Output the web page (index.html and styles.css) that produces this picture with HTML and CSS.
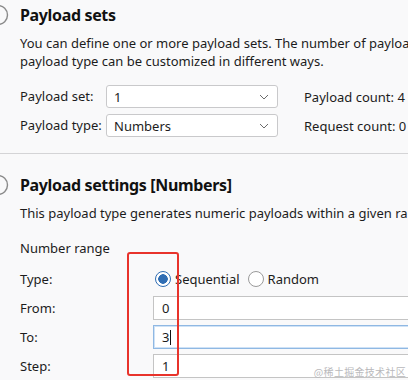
FILE: index.html
```html
<!DOCTYPE html>
<html>
<head>
<meta charset="utf-8">
<link rel="stylesheet" href="styles.css">
</head>
<body>
<div class="page">
  <section class="sec sec-sets">
    <div class="head">
      <svg class="tog" width="12" height="24" viewBox="0 0 12 24"><circle cx="-2" cy="12" r="9.5" fill="none" stroke="#8a8a8a" stroke-width="1.4"/></svg>
      <h2>Payload sets</h2>
    </div>
    <p class="desc">
      <span class="ln">You can define one or more payload sets. The number of payload sets depends on the attack type defined in the Positions tab. Various payload types are available for each payload set, and each</span>
      <span class="ln">payload type can be customized in different ways.</span>
    </p>
    <div class="grid">
      <span class="lbl">Payload set:</span>
      <div class="select"><span>1</span><svg class="chev" width="10" height="6" viewBox="0 0 10 6"><path d="M1 1 L5 5 L9 1" fill="none" stroke="#6b6b6b" stroke-width="1"/></svg></div>
      <span class="count">Payload count: 4</span>
      <span class="lbl">Payload type:</span>
      <div class="select"><span>Numbers</span><svg class="chev" width="10" height="6" viewBox="0 0 10 6"><path d="M1 1 L5 5 L9 1" fill="none" stroke="#6b6b6b" stroke-width="1"/></svg></div>
      <span class="count">Request count: 0</span>
    </div>
  </section>
  <section class="sec sec-settings">
    <div class="head">
      <svg class="tog" width="12" height="24" viewBox="0 0 12 24"><circle cx="-2" cy="12" r="9.5" fill="none" stroke="#8a8a8a" stroke-width="1.4"/></svg>
      <h2>Payload settings [Numbers]</h2>
    </div>
    <p class="desc one"><span class="ln">This payload type generates numeric payloads within a given range and in a specified format.</span></p>
    <div class="sub">Number range</div>
    <div class="form">
      <span class="flbl">Type:</span>
      <div class="radios">
        <label class="radio"><span class="dot on"></span>Sequential</label>
        <label class="radio"><span class="dot"></span>Random</label>
      </div>
      <span class="flbl">From:</span>
      <div class="input">0</div>
      <span class="flbl">To:</span>
      <div class="input focus">3<span class="caret"></span></div>
      <span class="flbl">Step:</span>
      <div class="input">1</div>
    </div>
    <div class="annot"></div>
  </section>
  <div class="mark">@稀土掘金技术社区</div>
</div>
</body>
</html>
```
FILE: styles.css
```css
html, body {
  margin: 0;
  padding: 0;
  background: #f9f9fa;
}
body {
  width: 408px;
  height: 380px;
  overflow: hidden;
  font-family: "Noto Sans", "Open Sans", sans-serif;
  font-size: 13px;
  color: #1c1c1c;
}
.page {
  position: relative;
  width: 408px;
  height: 380px;
  overflow: hidden;
}
.sec {
  padding-left: 20px;
  white-space: nowrap;
}
.sec-sets {
  padding-top: 3px;
  padding-bottom: 16px;
  border-bottom: 1px solid #d4d4d6;
}
.sec-settings {
  padding-top: 19px;
  position: relative;
}
.head {
  display: flex;
  align-items: center;
  height: 24px;
  position: relative;
}
.tog {
  position: absolute;
  left: -20px;
  top: 0;
}
h2 {
  margin: 0;
  font-size: 16px;
  font-weight: 700;
  color: #111;
  letter-spacing: -0.35px;
}
.desc {
  margin: 7px 0 0;
  line-height: 18px;
}
.ln {
  display: block;
  white-space: nowrap;
}
.desc.one {
  margin-top: 7px;
}
.grid {
  margin-top: 15px;
  display: grid;
  grid-template-columns: 86px 172px auto;
  grid-auto-rows: 23px;
  row-gap: 6px;
  align-items: center;
}
.lbl {
  line-height: 23px;
}
.select {
  box-sizing: border-box;
  height: 23px;
  background: #fff;
  border: 1px solid #c9c9cb;
  border-radius: 3px;
  display: flex;
  align-items: center;
  justify-content: space-between;
  padding: 0 8px 0 7px;
}
.count {
  padding-left: 26px;
}
.sub {
  margin-top: 17px;
  line-height: 18px;
}
.form {
  margin-top: 10px;
  display: grid;
  grid-template-columns: 133px 300px;
  grid-auto-rows: 24px;
  row-gap: 5px;
  align-items: center;
}
.radios {
  display: flex;
  align-items: center;
  gap: 6px;
}
.radio {
  display: flex;
  align-items: center;
  gap: 4px;
}
.dot {
  box-sizing: border-box;
  width: 16px;
  height: 16px;
  border-radius: 50%;
  border: 1px solid #9a9a9a;
  background: #fff;
  margin-left: 2px;
}
.dot.on {
  border: 1.5px solid #2f6db3;
  background: radial-gradient(circle, #2f6db3 0 4.5px, #fff 5px);
}
.input {
  box-sizing: border-box;
  height: 24px;
  background: #fff;
  border: 1px solid #c4c4c4;
  padding: 0 8px;
  display: flex;
  align-items: center;
}
.input.focus {
  border-color: #8fb8e3;
  box-shadow: inset 0 0 0 1px #cfe2f6;
}
.caret {
  display: inline-block;
  width: 1px;
  height: 15px;
  background: #111;
  margin-left: 1px;
}
.annot {
  position: absolute;
  left: 127px;
  top: 98px;
  width: 48px;
  height: 120px;
  border: 2px solid #e8332b;
  border-radius: 3px;
}
.mark {
  position: absolute;
  right: 2px;
  bottom: 1px;
  font-family: "Noto Sans CJK SC", sans-serif;
  font-size: 10px;
  color: #b9b9bc;
  letter-spacing: 0.3px;
}
```
